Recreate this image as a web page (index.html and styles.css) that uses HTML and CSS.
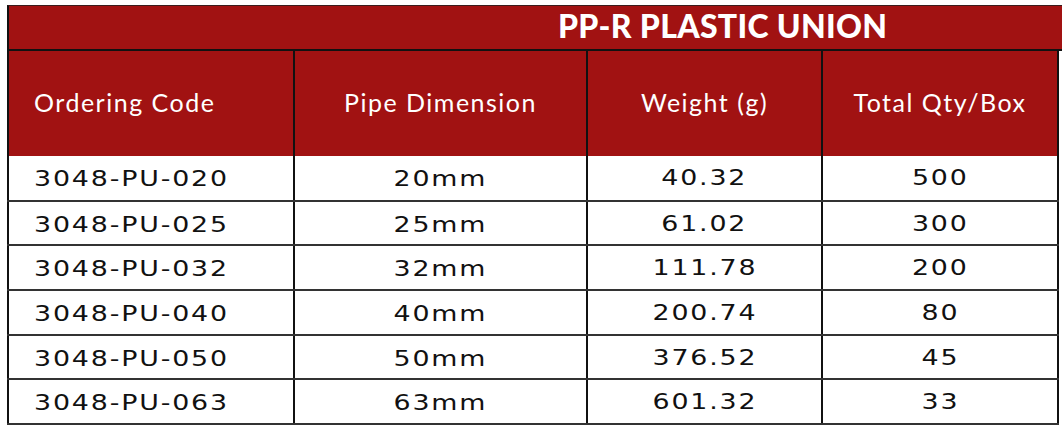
FILE: index.html
```html
<!DOCTYPE html>
<html lang="en">

<head>
  <meta charset="UTF-8">
  <title>PP-R Plastic Union</title>
  <link rel="stylesheet" href="styles.css">
</head>

<body>
  <main class="Sheet">
    <div class="Sheet-title">PP-R PLASTIC UNION</div>
    <table class="Specs">
      <thead>
        <tr>
          <th class="Specs-code">Ordering Code</th>
          <th>Pipe Dimension</th>
          <th>Weight (g)</th>
          <th>Total Qty/Box</th>
        </tr>
      </thead>
      <tbody>
        <tr>
          <td class="Specs-code"><span>3048-PU-020</span></td>
          <td><span>20mm</span></td>
          <td class="Specs-num"><span>40.32</span></td>
          <td class="Specs-num"><span>500</span></td>
        </tr>
        <tr>
          <td class="Specs-code"><span>3048-PU-025</span></td>
          <td><span>25mm</span></td>
          <td class="Specs-num"><span>61.02</span></td>
          <td class="Specs-num"><span>300</span></td>
        </tr>
        <tr>
          <td class="Specs-code"><span>3048-PU-032</span></td>
          <td><span>32mm</span></td>
          <td class="Specs-num"><span>111.78</span></td>
          <td class="Specs-num"><span>200</span></td>
        </tr>
        <tr>
          <td class="Specs-code"><span>3048-PU-040</span></td>
          <td><span>40mm</span></td>
          <td class="Specs-num"><span>200.74</span></td>
          <td class="Specs-num"><span>80</span></td>
        </tr>
        <tr>
          <td class="Specs-code"><span>3048-PU-050</span></td>
          <td><span>50mm</span></td>
          <td class="Specs-num"><span>376.52</span></td>
          <td class="Specs-num"><span>45</span></td>
        </tr>
        <tr>
          <td class="Specs-code"><span>3048-PU-063</span></td>
          <td><span>63mm</span></td>
          <td class="Specs-num"><span>601.32</span></td>
          <td class="Specs-num"><span>33</span></td>
        </tr>
      </tbody>
    </table>
  </main>
</body>

</html>
```

FILE: styles.css
```css
* {
  box-sizing: border-box;
}

body {
  margin: 0;
  background: #fff;
  color: #111;
  font-family: "DejaVu Sans", sans-serif;
}

.Sheet {
  padding: 5px 0 0 7px;
}

.Sheet-title {
  height: 46px;
  padding-left: 549px;
  background: #a11212;
  border-top: 1px solid #3a1c1c;
  border-left: 2px solid #111;
  border-bottom: 2px solid #111;
  color: #fff;
  font-family: Lato, sans-serif;
  font-size: 32px;
  font-weight: 900;
  letter-spacing: .3px;
  line-height: 40px;
}

.Specs {
  width: 1050px;
  border-collapse: collapse;
  table-layout: fixed;
}

.Specs th,
.Specs td {
  padding: 0;
  border-left: 2px solid #111;
  border-right: 2px solid #111;
  text-align: center;
}

.Specs th:nth-child(1) { width: 286px; }
.Specs th:nth-child(2) { width: 293px; }
.Specs th:nth-child(3) { width: 235px; }
.Specs th:nth-child(4) { width: 236px; }

.Specs th {
  height: 105px;
  padding-bottom: 4px;
  background: #a11212;
  color: #fff;
  font-family: Lato, sans-serif;
  font-size: 25px;
  font-weight: 400;
  letter-spacing: 1.5px;
}

.Specs td {
  height: 44.7px;
  padding-top: 2px;
  border-bottom: 2px solid #333;
  font-size: 22px;
  letter-spacing: 1.5px;
}

.Specs td span {
  display: inline-block;
  transform: scaleX(1.22);
}

.Specs .Specs-code {
  text-align: left;
  padding-left: 25px;
}

.Specs .Specs-code span {
  transform-origin: left center;
}

.Specs .Specs-num {
  padding-top: 0;
}
```
